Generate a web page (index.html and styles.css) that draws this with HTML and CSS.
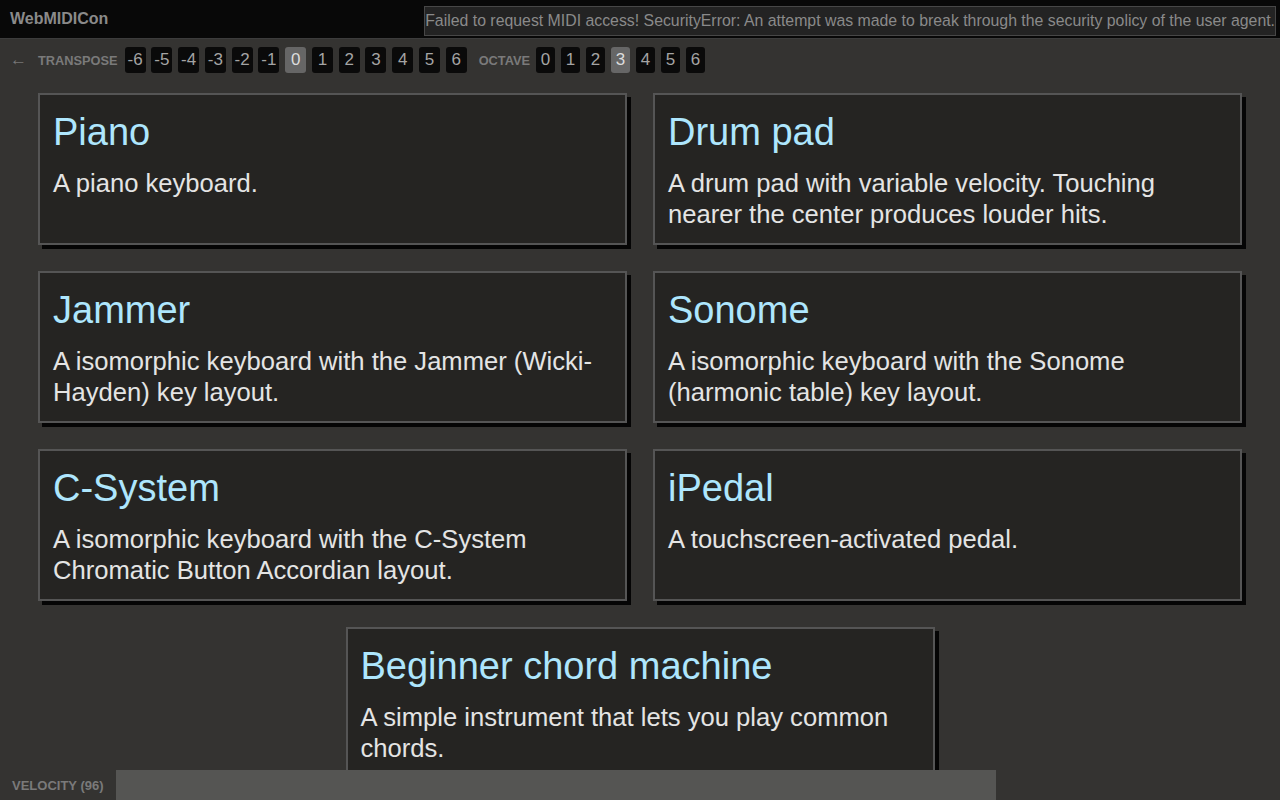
FILE: index.html
```html
<!DOCTYPE html>
<html lang="en">
<head>
<meta charset="utf-8">
<title>WebMIDICon</title>
<link rel="stylesheet" href="styles.css">
</head>
<body>
<div class="app">
  <header class="topbar">
    <div class="brand">WebMIDICon</div>
    <div class="error">Failed to request MIDI access! SecurityError: An attempt was made to break through the security policy of the user agent.</div>
  </header>
  <nav class="toolbar">
    <span class="back">←</span>
    <span class="label label-transpose">TRANSPOSE</span>
    <div class="btns btns-transpose">
      <span class="btn">-6</span><span class="btn">-5</span><span class="btn">-4</span><span class="btn">-3</span><span class="btn">-2</span><span class="btn">-1</span><span class="btn active">0</span><span class="btn">1</span><span class="btn">2</span><span class="btn">3</span><span class="btn">4</span><span class="btn">5</span><span class="btn">6</span>
    </div>
    <span class="label label-octave">OCTAVE</span>
    <div class="btns btns-octave">
      <span class="btn">0</span><span class="btn">1</span><span class="btn">2</span><span class="btn active">3</span><span class="btn">4</span><span class="btn">5</span><span class="btn">6</span>
    </div>
  </nav>
  <main class="list">
    <div class="card">
      <h2 class="card-title">Piano</h2>
      <p class="card-desc">A piano keyboard.</p>
    </div>
    <div class="card">
      <h2 class="card-title">Drum pad</h2>
      <p class="card-desc">A drum pad with variable velocity. Touching nearer the center produces louder hits.</p>
    </div>
    <div class="card">
      <h2 class="card-title">Jammer</h2>
      <p class="card-desc">A isomorphic keyboard with the Jammer (Wicki-Hayden) key layout.</p>
    </div>
    <div class="card">
      <h2 class="card-title">Sonome</h2>
      <p class="card-desc">A isomorphic keyboard with the Sonome (harmonic table) key layout.</p>
    </div>
    <div class="card">
      <h2 class="card-title">C-System</h2>
      <p class="card-desc">A isomorphic keyboard with the C-System Chromatic Button Accordian layout.</p>
    </div>
    <div class="card">
      <h2 class="card-title">iPedal</h2>
      <p class="card-desc">A touchscreen-activated pedal.</p>
    </div>
    <div class="card">
      <h2 class="card-title">Beginner chord machine</h2>
      <p class="card-desc">A simple instrument that lets you play common chords.</p>
    </div>
  </main>
  <footer class="velocity">
    <span class="velocity-label">VELOCITY (96)</span>
    <div class="velocity-track">
      <div class="velocity-fill" style="width: 75.59%"></div>
    </div>
  </footer>
</div>
</body>
</html>
```

FILE: styles.css
```css
html, body {
  margin: 0;
  padding: 0;
  height: 100%;
}

body {
  background: #343331;
  font-family: "Liberation Sans", Arial, sans-serif;
  color: #e6e6e6;
  overflow: hidden;
}

.app {
  display: flex;
  flex-direction: column;
  height: 800px;
}

.topbar {
  flex: 0 0 auto;
  height: 38px;
  background: #080808;
  border-bottom: 1px solid #3c3c3c;
  display: flex;
  align-items: center;
  justify-content: space-between;
  padding: 0 4px 0 10px;
}

.brand {
  font-size: 16px;
  font-weight: bold;
  color: #8a8a8a;
}

.error {
  font-size: 15.85px;
  line-height: 28px;
  color: #8a8a8a;
  background: #232323;
  border: 1px solid #474747;
  white-space: nowrap;
  margin-top: 4px;
}

.toolbar {
  flex: 0 0 auto;
  display: flex;
  align-items: center;
  padding: 8px 0 8px 10px;
}

.back {
  font-size: 17px;
  color: #777;
  width: 16px;
  margin-right: 12px;
}

.label {
  font-size: 12.8px;
  font-weight: bold;
  color: #7a7a7a;
}

.label-transpose {
  margin-right: 7px;
}

.label-octave {
  margin-left: 12px;
  margin-right: 6px;
}

.btns {
  display: flex;
}

.btns-transpose {
  gap: 5.75px;
}

.btns-octave {
  gap: 6px;
}

.btn {
  display: flex;
  align-items: center;
  justify-content: center;
  height: 26px;
  background: #0a0a0a;
  color: #a4a4a4;
  font-size: 17px;
  border-radius: 3px;
}

.btns-transpose .btn {
  width: 21px;
}

.btns-octave .btn {
  width: 19px;
}

.btn.active {
  background: #666;
  color: #dcdcdc;
}

.list {
  flex: 1 1 auto;
  overflow: hidden;
  display: flex;
  flex-wrap: wrap;
  justify-content: center;
  align-content: flex-start;
  gap: 26px;
  padding: 12px 38px 0;
}

.card {
  flex: 0 0 589px;
  box-sizing: border-box;
  background: #252422;
  border: 2px solid #555;
  box-shadow: 4px 4px 0 #050505;
  padding: 14px 13px 13px;
}

.card-title {
  margin: 0 0 13px;
  font-size: 38px;
  line-height: 46px;
  font-weight: normal;
  color: #aee6fd;
}

.card-desc {
  margin: 0;
  font-size: 25.6px;
  line-height: 31px;
  color: #e4e4e4;
}

.velocity {
  flex: 0 0 30px;
  display: flex;
  align-items: stretch;
  background: #343331;
  position: relative;
  z-index: 1;
}

.velocity-label {
  display: flex;
  align-items: center;
  padding: 0 12px;
  font-size: 13px;
  font-weight: bold;
  color: #7a7a7a;
  white-space: nowrap;
}

.velocity-track {
  flex: 1 1 auto;
}

.velocity-fill {
  height: 100%;
  background: #555553;
}
```
